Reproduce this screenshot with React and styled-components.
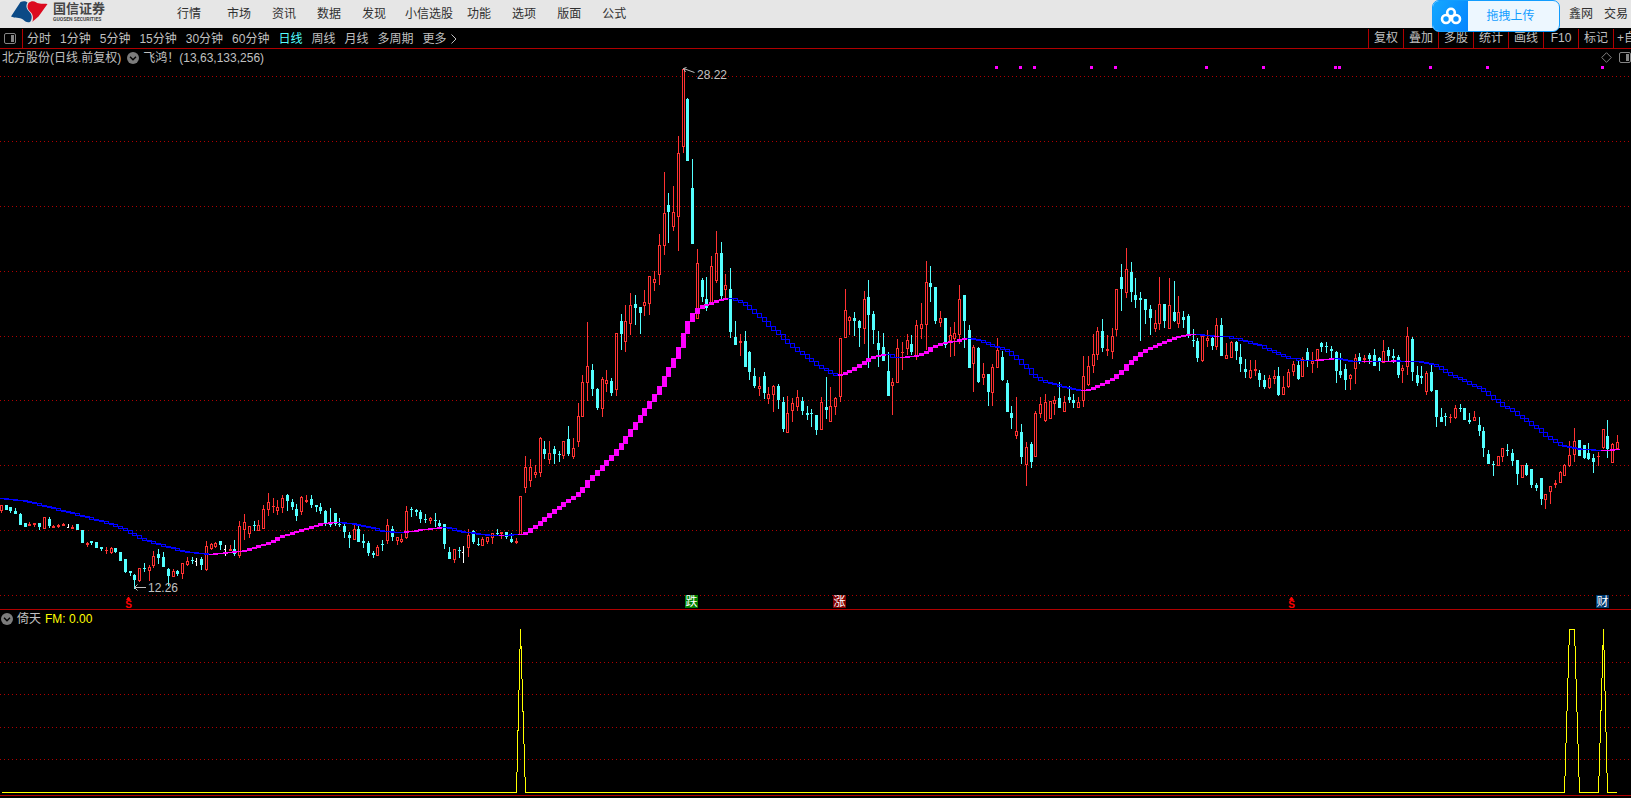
import React from "react";
import styled, { createGlobalStyle } from "styled-components";

const GlobalStyle = createGlobalStyle`
  * { box-sizing: border-box; }
  body {
    margin: 0;
    background: #000;
    color: #c0c0c0;
    font: 12px/16px "Liberation Sans", "Noto Sans CJK SC", sans-serif;
    overflow-x: hidden;
  }
  button { font: inherit; color: inherit; background: none; border: 0; padding: 0; white-space: nowrap; cursor: pointer; }
`;

const LINE = "#b00000";
const RED = "#ff3232";
const CYAN = "#54ffff";
const BLUE = "#0000ff";
const MAGENTA = "#ff00ff";
const YELLOW = "#ffff00";

/* ---------- data ---------- */

// Bars in order: colour key, high, body top, body bottom, low.
// Values are thirds of a chart unit, measured down from the block's base.
const BLOCKS = [
  [480, `r 75 75 93 99;c 75 75 90 90;c 81 81 93 99;c 84 93 102 102;c 98 102 135 135;c 129 129 141 141;r 126 132 138 138;r 129 129 135 141;c 129 129 141 150;r 111 111 147 147;
c 111 117 138 144;r 135 138 144 144;r 132 135 141 144;r 129 132 138 138;w 132 141 144 144;r 135 141 147 147;c 132 132 150 150;c 150 150 189 189;r 186 189 195 201;c 183 183 189 195;
c 186 186 204 204;c 201 201 207 213;r 201 210 213 222;r 201 204 219 222;c 204 204 216 219;c 216 216 243 243;c 237 237 276 279;c 273 273 279 288;c 282 285 300 327;r 264 264 303 306;
c 249 264 267 276;r 255 261 273 303;r 213 228 258 264;c 207 222 234 252;c 216 231 261 261;c 264 267 288 318;r 267 273 291 291;c 270 273 282 288;r 249 249 282 297;r 231 243 255 258;
c 231 240 243 252;w 234 243 246 258;c 231 237 255 270;r 183 198 270 273;r 189 192 207 210;r 186 189 201 204;c 183 183 195 210;w 195 207 210 228;r 195 207 213 213;c 180 207 222 228;
r 123 138 228 234;r 102 126 150 180;r 138 138 162 174;c 123 135 138 153;r 120 135 153 153;r 75 87 147 147;r 39 66 90 108;r 54 78 81 99;r 60 81 93 105;r 45 54 84 99;
c 42 45 63 93;c 57 66 81 90;c 72 87 108 123`],
  [470, `r 78 81 126 135;r 75 90 96 99;c 75 87 105 114;c 105 105 111 126;c 99 111 123 132;c 120 123 159 168;c 114 162 165 171;c 129 129 162 168;
c 144 162 165 171;c 156 168 186 204;c 186 195 204 234;r 165 177 210 210;c 168 177 216 216;c 192 213 219 234;c 213 219 249 258;c 243 249 255 264;r 225 231 258 258;c 210 222 225 243;
r 147 165 213 222;c 168 177 201 213;r 201 201 213 225;r 192 207 216 219;r 108 123 204 207;c 111 117 120 141;c 117 120 126 138;c 120 126 147 159;c 132 147 150 159;r 141 144 153 162;
c 129 150 153 171;c 150 159 168 171;c 162 162 222 237;c 231 246 267 267;r 237 237 270 279;c 231 240 243 264;w 228 246 249 279;r 177 195 234 261;c 180 183 216 222;c 204 222 225 228;
r 201 207 228 228;r 201 201 216 222;r 189 189 204 222;c 177 189 192 195;r 186 186 192 207;c 186 186 201 207;c 189 207 216 219;r 204 213 219 222;r 78 78 195 195`],
  [300, `r 468 501 564 579;r 477 501 543 561;r 495 516 525 534;r 411 414 519 531;c 423 447 462 477;r 423 459 480 492;c 438 447 462 492;c 453 462 465 486;r 423 423 468 477;c 378 417 462 468;
r 414 444 471 477;r 309 348 426 441;r 225 246 351 351;r 66 198 249 303;c 192 210 267 288;c 264 267 324 330;r 231 237 327 351;r 210 240 252 276;c 234 243 279 288;r 99 99 270 288;
c 42 63 102 150;r 15 63 126 156`],
  [60, `r 699 735 792 825;c 705 732 744 795;c 741 741 759 822;r 690 726 738 768;r 648 648 732 765;r 633 657 669 693;r 522 555 645 675;r 336 459 558 585;c 399 435 456 549;r 378 456 501 513;
r 228 279 471 573;r 27 27 261 279;c 114 117 303 303;c 297 384 552 552;r 567 609 777 777;c 654 660 711 726;c 651 717 744 753;r 588 618 732 735;r 513 579 663 669;c 546 579 708 717;
r 642 675 690 717;c 624 687 816 834;c 783 831 855 855;r 822 843 849 888;c 813 843 921 921;c 873 876 936 960;c 924 948 978 984;r 951 978 987 1008;c 936 948 999 1017;r 981 1002 1018 1032;
r 975 978 1005 1056;c 972 978 1020 1047;c 1011 1026 1107 1116;r 1008 1059 1119 1119;r 1014 1029 1053 1086;r 990 1011 1041 1053;c 1011 1023 1053 1065;c 1038 1059 1065 1080;c 1047 1059 1062 1101;c 1065 1065 1110 1125;
r 1011 1026 1110 1110;c 951 1041 1050 1077;r 981 1038 1086 1086;r 1011 1014 1042 1065`],
  [240, `r 294 294 471 486;r 147 210 294 294;r 228 231 243 285;c 216 234 243 288;c 240 243 264 321;r 153 177 267 312;c 120 171 225 384;c 213 222 270 312;c 273 309 330 381;c 279 321 363 363;
c 336 393 468 468;r 414 426 438 525;r 297 324 429 429;r 306 336 339 390;r 282 300 327 345;c 285 312 336 345;r 240 255 351 360;r 189 252 267 297;r 63 126 255 330;c 78 129 141 186;
c 141 141 243 252;r 213 234 249 261;c 234 234 315 324;r 261 285 303 351;r 246 279 297 348;r 135 177 285 312;c 165 165 243 324;c 255 270 384 384;r 315 321 372 456;c 321 324 426 429;
r 369 402 414 435;c 402 402 456 498;r 372 381 459 498;r 294 330 384 384;c 333 351 420 423;c 420 429 516 516;c 498 519 534 567;r 471 573 588 597;c 552 576 651 672;r 606 621 675 738;
c 606 612 666 684;r 513 519 651 651;r 471 492 522 534;r 462 486 543 546;r 483 483 537 537;r 468 480 492 525;c 426 474 504 504;r 468 486 516 516;c 438 471 480 489;c 462 480 489 504;
r 471 486 504 504;r 348 408 483 501;r 348 378 435 438;r 282 342 378 399;r 261 273 345 360;c 237 273 324 336;r 285 327 333 348;r 264 288 336 357;r 147 147 270 288;c 72 111 147 213;
r 24 87 159 174;c 66 96 156 186;c 114 165 180 204;c 156 174 180 303;c 177 177 210 252;c 195 207 234 285;r 210 249 267 276;r 111 192 252 270;c 192 192 243 264;r 114 195 267 267;
c 123 216 243 246;r 168 216 252 264;c 213 231 240 264;c 222 228 285 294;c 267 300 303 321;c 294 303 354 366;r 288 288 363 366;r 270 294 303 321;c 285 294 318 330;r 234 255 321 330;
c 234 255 348 348;r 309 345 357 357;r 303 306 354 354;c 303 306 333 360;c 312 351 372 396;c 357 387 396 414;r 360 390 414 417;r 360 387 393 408;c 390 399 420 441;c 405 420 441 447;
r 405 414 444 447;r 390 408 417 432;c 381 408 465 468;r 408 441 465 465;r 387 396 441 444;r 363 372 396 408;c 363 375 417 420;r 351 357 411 411;c 324 336 363 381;r 336 363 372 399;
r 327 327 360 384;c 306 309 321 336;c 306 318 321 339;c 318 327 333 357;c 333 336 393 429`],
  [310, `c 129 183 195 204;c 162 177 210 240;r 192 195 207 240;r 132 144 177 222;c 129 141 153 162;r 135 144 150 159;c 129 135 147 162;c 117 135 168 168;c 141 144 156 183;r 90 123 159 159;
c 111 120 138 156;c 117 138 144 159;c 135 141 195 204;r 165 174 183 219;r 51 78 171 195;c 81 87 186 213;c 168 195 219 228;c 168 198 204 222;r 183 189 246 255;c 165 186 243 246;
c 240 240 321 351;c 294 321 336 336;c 309 318 321 348;r 312 321 324 339;r 285 294 324 327;c 282 294 297 306;c 294 294 330 330;c 309 330 336 342;r 303 321 333 333;c 321 345 363 378;
c 351 363 414 441;c 420 432 462 462;c 453 462 465 498;r 438 438 468 468;r 414 414 441 456;c 402 420 423 438;c 417 429 453 468;c 450 450 492 525;r 465 465 504 504;c 459 465 495 498;
c 477 477 525 534;c 519 525 534 543;c 504 504 567 585;r 552 552 570 597;r 528 528 546 582;r 510 519 525 534;r 483 486 519 519;r 462 465 498 498;r 393 435 468 471;r 354 393 435 456;
c 390 390 438 438;c 405 405 444 447;c 399 429 447 450;c 432 444 456 489;r 426 438 441 468;r 357 357 414 417;c 330 378 417 444;r 399 402 459 459;r 375 396 417 417`],
];

const BARS = BLOCKS.flatMap(([base, rows]) =>
  rows.split(";").map((row) => {
    const [kind, ...v] = row.trim().split(" ");
    const [high, top, bottom, low] = v.map((n) => base + Math.round(Number(n) / 3));
    return { kind, high, top, bottom, low };
  })
);

// Sparse start of the moving average as [bar, level], then one level per bar.
const AVERAGE_KEYS = [
  [0, 498], [5, 501], [10, 507], [17, 516], [23, 524], [26, 530], [29, 538], [32, 543], [38, 551], [43, 554],
  [50, 551], [55, 544], [59, 535], [61, 532], [63, 529], [65, 526], [67, 523], [70, 522], [73, 523], [77, 527],
  [80, 531], [84, 532], [87, 530], [90, 528], [92, 527], [93, 527], [96, 531], [99, 533], [103, 535], [109, 534],
];
const AVERAGE_TAIL = [
  532, 528, 525, 521, 517, 513, 509, 506, 502, 499, 496, 492, 487, 480, 475, 470, 465, 460, 455, 449,
  443, 436, 429, 422, 415, 408, 401, 394, 386, 376, 367, 358, 347, 333, 321, 313, 308, 305, 304, 302,
  300, 299, 298, 298, 300, 302, 305, 309, 313, 317, 321, 326, 330, 334, 339, 343, 347, 351, 354, 358,
  361, 365, 368, 370, 373, 375, 374, 372, 370, 367, 364, 361, 358, 356, 355, 354, 354, 357, 357, 357,
  356, 356, 355, 353, 351, 347, 345, 343, 342, 341, 341, 339, 338, 338, 339, 340, 342, 344, 346, 347,
  349, 351, 355, 359, 364, 368, 374, 377, 380, 382, 383, 384, 386, 387, 388, 389, 390, 390, 389, 387,
  385, 383, 380, 378, 374, 370, 364, 360, 356, 352, 349, 347, 345, 343, 341, 339, 337, 336, 335, 334,
  334, 334, 335, 335, 336, 336, 336, 336, 338, 338, 340, 341, 343, 344, 345, 348, 350, 352, 354, 356,
  358, 358, 360, 360, 360, 360, 360, 359, 359, 358, 358, 359, 360, 361, 361, 361, 361, 361, 361, 361,
  361, 361, 360, 361, 361, 361, 361, 361, 362, 363, 364, 366, 369, 372, 375, 377, 379, 381, 384, 386,
  388, 391, 395, 399, 402, 406, 408, 411, 415, 418, 421, 425, 428, 432, 436, 439, 442, 445, 446, 447,
  448, 449, 449, 449, 450, 450, 450, 450, 449, 449,
];
const RISING = [
  [44, 70], [85, 92], [105, 105], [109, 152], [176, 185], [189, 202], [227, 250], [255, 255],
  [276, 279], [286, 287], [290, 292], [295, 295], [336, 339],
];

const AVERAGE = [
  ...AVERAGE_KEYS.slice(1).flatMap(([to, y1], k) => {
    const [from, y0] = AVERAGE_KEYS[k];
    return Array.from({ length: to - from }, (_, n) => Math.round(y0 + ((y1 - y0) * n) / (to - from)));
  }),
  534,
  ...AVERAGE_TAIL,
];

const barX = (i) => Math.floor(1.39 + 4.767 * i);
const box = (x, y, w, h) => `M${x} ${y}h${w}v${h}h${-w}z`;
// Drawn counter to box(), so that it cuts an opening out of it.
const hole = (x, y, w, h) => `M${x} ${y}v${h}h${w}v${-h}z`;

function candlePaths() {
  const out = { r: "", c: "", w: "" };
  BARS.forEach(({ kind, high, top, bottom, low }, i) => {
    const x = barX(i);
    let d = "";
    if (top > high) d += box(x, high, 1, top - high);
    if (low > bottom) d += box(x, bottom, 1, low - bottom);
    d += box(x - 1, top, kind === "w" ? 2 : 3, Math.max(1, bottom - top));
    if (kind === "r" && bottom - top > 2) d += hole(x, top + 1, 1, bottom - top - 2);
    out[kind] += d;
  });
  return out;
}

function averagePaths() {
  const out = { up: "", down: "" };
  AVERAGE.forEach((y, i) => {
    const prev = AVERAGE[Math.max(0, i - 1)];
    const top = Math.min(y, prev);
    const h = Math.abs(y - prev) + 1;
    const x = barX(i) - 2;
    const up = RISING.some(([a, b]) => i >= a && i <= b);
    if (up) out.up += box(x, top, 5, h);
    else out.down += box(x, top, 5, h) + (h > 2 ? hole(x + 1, top + 1, 3, h - 2) : "");
  });
  return out;
}

const CANDLES = candlePaths();
const TREND = averagePaths();
const WIDTH = 1631;
const SIGNAL_DOTS = [996, 1020, 1034, 1091, 1115, 1206, 1263, 1335, 1339, 1430, 1487, 1602];
const FM_PEAKS = [[109, 109], [329, 330], [336, 336]];
const fmLine =
  "M1.5 792.5" +
  FM_PEAKS.map(
    ([a, b]) =>
      `L${barX(a - 1) + 0.5} 792.5L${barX(a) + 0.5} 629.5L${barX(b) + 0.5} 629.5L${barX(b + 1) + 0.5} 792.5`
  ).join("") +
  "L1617 792.5";

const MENU = [
  ["行情", 0], ["市场", 26], ["资讯", 21], ["数据", 21], ["发现", 21],
  ["小信选股", 19], ["功能", 14], ["选项", 21], ["版面", 21], ["公式", 21],
];
const PERIODS = ["分时", "1分钟", "5分钟", "15分钟", "30分钟", "60分钟", "日线", "周线", "月线", "多周期"];
const TOOLS = ["复权", "叠加", "多股", "统计", "画线", "F10", "标记"];

/* ---------- styles ---------- */

const Page = styled.div`
  display: flex;
  flex-direction: column;
  min-height: 100vh;
  overflow: hidden;
  background: #000;
`;

const TopBar = styled.header`
  position: relative;
  display: flex;
  align-items: flex-start;
  height: 28px;
  background: #e6e6e6;
  color: #303030;
`;

const Brand = styled.a`
  display: flex;
  gap: 5px;
  width: 177px;
  padding-left: 10px;
  color: #454545;
  text-decoration: none;
`;

const BrandText = styled.span`
  display: flex;
  flex-direction: column;
  padding-top: 2px;
`;

const BrandName = styled.strong`
  font-size: 13px;
  line-height: 14px;
`;

const BrandSub = styled.small`
  font-family: Roboto, "Liberation Sans", sans-serif;
  font-size: 5px;
  line-height: 6px;
  font-weight: bold;
`;

const Menu = styled.nav`
  display: flex;
  flex: 1;
  padding-top: 6px;
`;

const MenuItem = styled.button`
  margin-left: ${(p) => p.$gap}px;
`;

const Account = styled.div`
  display: flex;
  gap: 11px;
  padding: 6px 3px 0 0;
`;

const Upload = styled.button`
  position: absolute;
  top: 0;
  right: 71px;
  z-index: 2;
  display: flex;
  width: 128px;
  height: 32px;
  overflow: hidden;
  border: 1px solid #129dff;
  border-radius: 7px;
  background: #edf7ff;
  color: #129dff;
`;

const UploadMark = styled.span`
  display: flex;
  align-items: center;
  justify-content: center;
  width: 35px;
  height: 30px;
  background: linear-gradient(120deg, #14a8ff, #0684ff);
`;

const UploadLabel = styled.span`
  flex: 1;
  line-height: 30px;
  padding-right: 6px;
`;

const PeriodBar = styled.div`
  display: flex;
  height: 21px;
  padding-top: 1px;
  border-bottom: 1px solid ${LINE};
`;

const LayoutToggle = styled.button`
  display: flex;
  align-items: center;
  width: 23px;
  padding-left: 4px;
  border-right: 1px solid ${LINE};
`;

const Periods = styled.nav`
  display: flex;
  flex: 1;
  gap: 9px;
  padding-left: 4px;
`;

const Period = styled.button`
  display: flex;
  align-items: center;
  gap: 4px;
  height: 19px;
  color: ${(p) => (p.$active ? CYAN : "inherit")};
`;

const Tools = styled.div`
  display: flex;
`;

const Tool = styled.button`
  width: ${(p) => (p.$clipped ? 18 : 35)}px;
  height: 19px;
  line-height: 19px;
  padding-left: ${(p) => (p.$clipped ? 3 : 0)}px;
  overflow: hidden;
  text-align: ${(p) => (p.$clipped ? "left" : "center")};
  border-left: 1px solid ${LINE};
`;

const Panel = styled.section`
  border-bottom: 1px solid ${LINE};
`;

const Caption = styled.div`
  display: flex;
  align-items: center;
  gap: 4px;
  height: 17px;
  padding-left: ${(p) => p.$indent}px;
  white-space: nowrap;
`;

const CaptionTools = styled.div`
  display: flex;
  align-items: center;
  gap: 7px;
  margin-left: auto;
`;

const Collapse = styled.button`
  display: flex;
  margin-left: ${(p) => p.$gap}px;
`;

const Reading = styled.span`
  color: ${YELLOW};
`;

const Plot = styled.div`
  position: relative;
  height: ${(p) => p.$height}px;
`;

const Canvas = styled.svg`
  display: block;
  width: 100%;
  height: 100%;
`;

const PriceTag = styled.div`
  position: absolute;
  left: ${(p) => (p.$x / WIDTH) * 100}%;
  top: ${(p) => p.$y}px;
  display: flex;
  gap: 2px;
`;

const EventBadge = styled.span`
  position: absolute;
  bottom: 1px;
  left: ${(p) => (p.$x / WIDTH) * 100}%;
  width: 13px;
  height: 13px;
  font-size: 12px;
  line-height: 14px;
  text-align: center;
  color: #fff;
  background: ${(p) => p.$color};
`;

const ShareMark = styled.span`
  position: absolute;
  bottom: 0;
  left: ${(p) => (p.$x / WIDTH) * 100}%;
  display: flex;
  flex-direction: column;
  align-items: center;
  width: 7px;
  color: #ff0000;
  font-size: 10px;
  font-weight: bold;
  line-height: 9px;
`;

/* ---------- drawings ---------- */

const BrandMark = () => (
  <svg width="38" height="24" viewBox="0 0 38 24" aria-hidden="true">
    <path d="M10.5 2C13 .8 16 1 17.500 2.500C15.500 6 16.500 9 19.500 12C22 14.500 22.500 18 20.500 21.500C18 23.500 15 21.500 13 19.500C9.500 17 5 18.500 1 16.500Z" fill="#0b4a86" />
    <path d="M18.500 3C21 .5 24 .8 26 2.200C29 4.500 33 3 37.500 4L28.500 16.500C25.500 19.500 23.500 20 22.500 22C23.500 17.500 23 14 20 11.500C17.200 9 16.800 6 18.500 3Z" fill="#dc0a1e" />
  </svg>
);

const CloudMark = () => (
  <svg width="22" height="18" viewBox="0 0 22 18" fill="none" stroke="#fff" strokeWidth="2.600" aria-hidden="true">
    <circle cx="11" cy="5.500" r="3.800" />
    <circle cx="6" cy="12" r="4" />
    <circle cx="16" cy="12" r="4" />
  </svg>
);

const SplitIcon = () => (
  <svg width="12" height="11" viewBox="0 0 12 11" aria-hidden="true">
    <rect x="0.500" y="0.500" width="11" height="10" rx="1.500" fill="none" stroke="#858585" />
    <rect x="7" y="2" width="3" height="7" fill="#858585" />
  </svg>
);

const ChevronDisc = () => (
  <svg width="12" height="12" viewBox="0 0 12 12" aria-hidden="true">
    <circle cx="6" cy="6" r="6" fill="#7c7c7c" />
    <path d="M3 4.700L6 7.700L9 4.700" fill="none" stroke="#000" strokeWidth="1.400" />
  </svg>
);

const Grid = ({ levels }) => (
  <g stroke={LINE} strokeDasharray="1 3">
    {levels.map((y) => (
      <line key={y} x1="0" x2={WIDTH} y1={y + 0.5} y2={y + 0.5} />
    ))}
  </g>
);

const PriceChart = () => (
  <Canvas viewBox={`0 66 ${WIDTH} 543`} preserveAspectRatio="none" shapeRendering="crispEdges" role="img" aria-label="日线">
    <Grid levels={[76, 141, 206, 271, 336, 400, 465, 530, 595]} />
    <path d={CANDLES.r} fill={RED} />
    <path d={CANDLES.c} fill={CYAN} />
    <path d={CANDLES.w} fill="#fff" />
    <path d={TREND.down} fill={BLUE} />
    <path d={TREND.up} fill={MAGENTA} />
    {SIGNAL_DOTS.map((x) => (
      <rect key={x} x={x - 1} y="66" width="3" height="3" fill={MAGENTA} />
    ))}
  </Canvas>
);

const SignalChart = () => (
  <Canvas viewBox={`0 627 ${WIDTH} 168`} preserveAspectRatio="none" shapeRendering="crispEdges" role="img" aria-label="FM">
    <Grid levels={[662, 694, 727, 759]} />
    <path d={fmLine} fill="none" stroke={YELLOW} />
  </Canvas>
);

/* ---------- page ---------- */

export default function App() {
  return (
    <Page>
      <GlobalStyle />
      <TopBar>
        <Brand href="#">
          <BrandMark />
          <BrandText>
            <BrandName>国信证券</BrandName>
            <BrandSub>GUOSEN SECURITIES</BrandSub>
          </BrandText>
        </Brand>
        <Menu>
          {MENU.map(([label, gap]) => (
            <MenuItem key={label} $gap={gap}>{label}</MenuItem>
          ))}
        </Menu>
        <Account>
          <button>鑫网</button>
          <button>交易</button>
        </Account>
        <Upload>
          <UploadMark><CloudMark /></UploadMark>
          <UploadLabel>拖拽上传</UploadLabel>
        </Upload>
      </TopBar>

      <PeriodBar>
        <LayoutToggle aria-label="布局"><SplitIcon /></LayoutToggle>
        <Periods>
          {PERIODS.map((label) => (
            <Period key={label} $active={label === "日线"}>{label}</Period>
          ))}
          <Period>
            更多
            <svg width="6" height="10" viewBox="0 0 6 10" fill="none" stroke="currentColor" aria-hidden="true">
              <path d="M0.500 0.500L5 5L0.500 9.500" />
            </svg>
          </Period>
        </Periods>
        <Tools>
          {TOOLS.map((label) => (
            <Tool key={label}>{label}</Tool>
          ))}
          <Tool $clipped>+自</Tool>
        </Tools>
      </PeriodBar>

      <Panel>
        <Caption $indent={2}>
          <span>北方股份(日线.前复权)</span>
          <Collapse $gap={2} aria-label="指标"><ChevronDisc /></Collapse>
          <span>飞鸿！(13,63,133,256)</span>
          <CaptionTools>
            <svg width="11" height="11" viewBox="0 0 11 11" fill="none" stroke="#808080" aria-hidden="true">
              <path d="M5.500 0.700L10.300 5.500L5.500 10.300L0.700 5.500Z" />
            </svg>
            <SplitIcon />
          </CaptionTools>
        </Caption>
        <Plot $height={543}>
          <PriceChart />
          <PriceTag $x={683} $y={1}>
            <svg width="12" height="8" viewBox="0 0 12 8" fill="none" stroke="currentColor" aria-hidden="true">
              <path d="M3.500 0.500L0.500 1.500L2.500 5M0.500 1.500L11.500 5.500" />
            </svg>
            <span>28.22</span>
          </PriceTag>
          <PriceTag $x={134} $y={514}>
            <svg width="12" height="16" viewBox="0 0 12 16" fill="none" stroke="currentColor" aria-hidden="true">
              <path d="M3.500 4.500L0.500 7.500L3.500 10.500M0.500 7.500H12" />
            </svg>
            <span>12.26</span>
          </PriceTag>
          {[125, 1288].map((x) => (
            <ShareMark key={x} $x={x}>
              <svg width="5" height="3" viewBox="0 0 5 3" aria-hidden="true">
                <path d="M0 3L2 0H3L5 3Z" fill="currentColor" />
              </svg>
              S
            </ShareMark>
          ))}
          <EventBadge $x={685} $color="#008000">跌</EventBadge>
          <EventBadge $x={833} $color="#800000">涨</EventBadge>
          <EventBadge $x={1596} $color="#003a70">财</EventBadge>
        </Plot>
      </Panel>

      <Panel>
        <Caption $indent={1}>
          <Collapse $gap={0} aria-label="指标"><ChevronDisc /></Collapse>
          <span>倚天</span>
          <Reading>FM: 0.00</Reading>
        </Caption>
        <Plot $height={168}>
          <SignalChart />
        </Plot>
      </Panel>
    </Page>
  );
}
